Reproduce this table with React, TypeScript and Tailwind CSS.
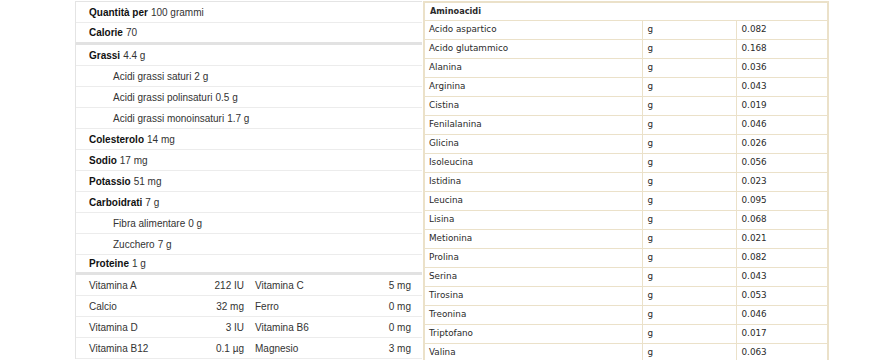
import React from "react";

type Riga = {
  label: string;
  valore: string;
  bold?: boolean;
  indent?: boolean;
  alto?: string;
};

const righe: Riga[] = [
  { label: "Quantità per", valore: "100 grammi", bold: true },
  { label: "Calorie", valore: "70", bold: true, alto: "h-[22px] border-b-[3px] border-[#e2e2e2]" },
  { label: "Grassi", valore: "4.4 g", bold: true },
  { label: "Acidi grassi saturi", valore: "2 g", indent: true },
  { label: "Acidi grassi polinsaturi", valore: "0.5 g", indent: true },
  { label: "Acidi grassi monoinsaturi", valore: "1.7 g", indent: true },
  { label: "Colesterolo", valore: "14 mg", bold: true },
  { label: "Sodio", valore: "17 mg", bold: true },
  { label: "Potassio", valore: "51 mg", bold: true },
  { label: "Carboidrati", valore: "7 g", bold: true },
  { label: "Fibra alimentare", valore: "0 g", indent: true },
  { label: "Zucchero", valore: "7 g", indent: true },
  { label: "Proteine", valore: "1 g", bold: true, alto: "h-[20px] border-b-[3px] border-[#e2e2e2]" },
];

const vitamine = [
  ["Vitamina A", "212 IU", "Vitamina C", "5 mg"],
  ["Calcio", "32 mg", "Ferro", "0 mg"],
  ["Vitamina D", "3 IU", "Vitamina B6", "0 mg"],
  ["Vitamina B12", "0.1 µg", "Magnesio", "3 mg"],
];

const aminoacidi = [
  ["Acido aspartico", "0.082"],
  ["Acido glutammico", "0.168"],
  ["Alanina", "0.036"],
  ["Arginina", "0.043"],
  ["Cistina", "0.019"],
  ["Fenilalanina", "0.046"],
  ["Glicina", "0.026"],
  ["Isoleucina", "0.056"],
  ["Istidina", "0.023"],
  ["Leucina", "0.095"],
  ["Lisina", "0.068"],
  ["Metionina", "0.021"],
  ["Prolina", "0.082"],
  ["Serina", "0.043"],
  ["Tirosina", "0.053"],
  ["Treonina", "0.046"],
  ["Triptofano", "0.017"],
  ["Valina", "0.063"],
];

export default function App() {
  return (
    <div className="w-[870px] h-[360px] bg-white overflow-hidden flex items-start pl-[75px] pt-[1px]">
      {/* valori nutrizionali */}
      <div className="w-[347px] border-l border-t border-[#e4e4e4] font-['Liberation_Sans',Arial,sans-serif] text-[10px] text-[#333]">
        {righe.map((r) => (
          <div
            key={r.label}
            className={`flex items-center ${r.indent ? "pl-[37px]" : "pl-[13px]"} ${r.alto ?? "h-[21px] border-b border-[#ececec]"}`}
          >
            <span className={r.bold ? "font-bold text-[#111]" : ""}>{r.label}</span>
            <span className="ml-[3px]">{r.valore}</span>
          </div>
        ))}
        {vitamine.map((v) => (
          <div key={v[0]} className="flex items-center h-[21px] border-b border-[#ececec]">
            <div className="w-[173px] flex justify-between pl-[13px] pr-[5px]">
              <span>{v[0]}</span>
              <span>{v[1]}</span>
            </div>
            <div className="w-[173px] flex justify-between pl-[6px] pr-[11px]">
              <span>{v[2]}</span>
              <span>{v[3]}</span>
            </div>
          </div>
        ))}
      </div>

      {/* aminoacidi */}
      <table className="ml-[1px] w-[406px] border-collapse border-2 border-[#ebe1c9] font-['DejaVu_Sans',Verdana,sans-serif] text-[8.8px] text-[#2a2a2a]">
        <tbody>
          <tr className="h-[18px]">
            <td colSpan={3} className="border border-[#ebe1c9] px-[5px] font-bold text-[8.2px]">
              Aminoacidi
            </td>
          </tr>
          {aminoacidi.map((a) => (
            <tr key={a[0]} className="h-[19px]">
              <td className="w-[218px] border border-[#ebe1c9] px-[4px]">{a[0]}</td>
              <td className="w-[94px] border border-[#ebe1c9] px-[5px]">g</td>
              <td className="border border-[#ebe1c9] px-[5px]">{a[1]}</td>
            </tr>
          ))}
        </tbody>
      </table>
    </div>
  );
}
